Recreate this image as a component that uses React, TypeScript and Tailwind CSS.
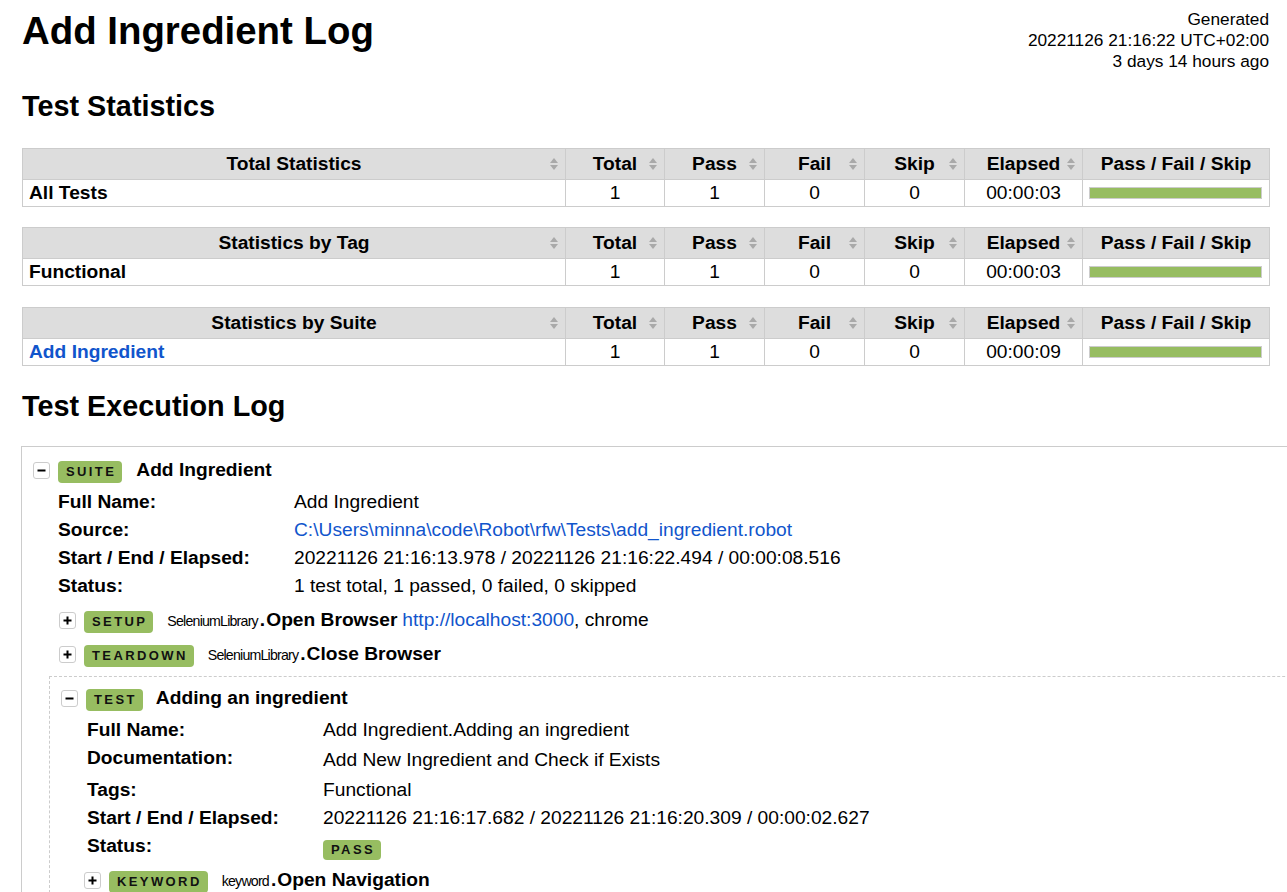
import React from "react";

type StatRow = {
  name: string;
  total: number;
  pass: number;
  fail: number;
  skip: number;
  elapsed: string;
  link?: boolean;
};

const TH = "relative border border-[#ccc] bg-[#ddd] px-[6px] py-[4px] text-center font-bold leading-[22px]";
const TD = "border border-[#ccc] px-[6px] py-[2px] text-center leading-[22px]";
const TD_NAME = "border border-[#ccc] px-[6px] py-[2px] text-left font-bold leading-[22px]";

function SortIcon() {
  return (
    <svg
      width="10"
      height="14"
      viewBox="0 0 10 14"
      className="absolute right-[6px] top-1/2 -translate-y-1/2"
    >
      <path d="M5 1 9 6H1z" fill="#a9a9a9" />
      <path d="M5 13 1 8h8z" fill="#a9a9a9" />
    </svg>
  );
}

function StatsTable({ title, row }: { title: string; row: StatRow }) {
  return (
    <table className="w-[1248px] table-fixed border-collapse">
      <colgroup>
        <col />
        <col className="w-[99px]" />
        <col className="w-[100px]" />
        <col className="w-[100px]" />
        <col className="w-[100px]" />
        <col className="w-[118px]" />
        <col className="w-[187px]" />
      </colgroup>
      <thead>
        <tr>
          <th className={TH}>
            {title}
            <SortIcon />
          </th>
          {["Total", "Pass", "Fail", "Skip", "Elapsed"].map(h => (
            <th key={h} className={TH}>
              {h}
              <SortIcon />
            </th>
          ))}
          <th className={TH}>Pass / Fail / Skip</th>
        </tr>
      </thead>
      <tbody>
        <tr>
          <td className={TD_NAME}>
            {row.link ? <span className="text-[#15c]">{row.name}</span> : row.name}
          </td>
          <td className={TD}>{row.total}</td>
          <td className={TD}>{row.pass}</td>
          <td className={TD}>{row.fail}</td>
          <td className={TD}>{row.skip}</td>
          <td className={TD}>{row.elapsed}</td>
          <td className="border border-[#ccc] py-[2px] pl-[6px] pr-[7px]">
            <div className="h-[12px] border border-[#ccc] bg-[#f2f2f2]">
              <div className="h-full w-full bg-[#97bd61]" />
            </div>
          </td>
        </tr>
      </tbody>
    </table>
  );
}

function Toggle({ open }: { open: boolean }) {
  return (
    <span className="flex h-[17px] w-[17px] shrink-0 items-center justify-center rounded-[3px] border border-[#ccc] bg-white">
      <svg width="11" height="11" viewBox="0 0 11 11">
        <rect x="1.5" y="4.5" width="8" height="2" fill="#000" />
        {!open && <rect x="4.5" y="1.5" width="2" height="8" fill="#000" />}
      </svg>
    </span>
  );
}

function Badge({ children, small }: { children: React.ReactNode; small?: boolean }) {
  return (
    <span
      className={
        small
          ? "inline-block rounded-[4px] bg-[#97bd61] pl-[8px] pr-[6px] py-[2px] text-[13px] font-bold leading-[16px] tracking-[2.4px] text-[#111]"
          : "inline-block rounded-[4px] bg-[#97bd61] pl-[8px] pr-[6px] py-[3px] text-[13px] font-bold leading-[16px] tracking-[2.4px] text-[#111]"
      }
    >
      {children}
    </span>
  );
}

function Meta({ label, children }: { label: string; children: React.ReactNode }) {
  return (
    <div className="flex h-[28px] items-center">
      <div className="w-[236px] shrink-0 font-bold">{label}</div>
      <div>{children}</div>
    </div>
  );
}

function KeywordRow({
  type,
  lib,
  name,
  args,
}: {
  type: string;
  lib: string;
  name: string;
  args?: React.ReactNode;
}) {
  return (
    <div className="flex h-[34px] items-center pl-[10px]">
      <Toggle open={false} />
      <span className="ml-[8px]">
        <Badge>{type}</Badge>
      </span>
      <span className="ml-[14px] whitespace-nowrap">
        <span className="text-[14.2px] tracking-[-0.8px]">{lib}</span>
        <span className="ml-[2px] font-bold">.</span>
        <span className="ml-[1px] font-bold">{name}</span>
        {args && <span className="ml-[5px]">{args}</span>}
      </span>
    </div>
  );
}

export default function App() {
  return (
    <div className="h-[892px] w-[1287px] overflow-hidden bg-white font-['Liberation_Sans',Arial,sans-serif] text-[19.2px] text-black">
      <div className="flex items-start justify-between pl-[22px] pr-[18px] pt-[9px]">
        <h1 className="text-[38.4px] font-bold leading-[44px]">Add Ingredient Log</h1>
        <div className="text-right text-[17.28px] leading-[21px]">
          Generated
          <br />
          20221126 21:16:22 UTC+02:00
          <br />3 days 14 hours ago
        </div>
      </div>

      <div className="pl-[22px]">
        <h2 className="mt-[17px] text-[28.8px] font-bold leading-[34px]">Test Statistics</h2>

        <div className="mt-[25px]">
          <StatsTable
            title="Total Statistics"
            row={{ name: "All Tests", total: 1, pass: 1, fail: 0, skip: 0, elapsed: "00:00:03" }}
          />
        </div>
        <div className="mt-[20px]">
          <StatsTable
            title="Statistics by Tag"
            row={{ name: "Functional", total: 1, pass: 1, fail: 0, skip: 0, elapsed: "00:00:03" }}
          />
        </div>
        <div className="mt-[21px]">
          <StatsTable
            title="Statistics by Suite"
            row={{ name: "Add Ingredient", total: 1, pass: 1, fail: 0, skip: 0, elapsed: "00:00:09", link: true }}
          />
        </div>

        <h2 className="mt-[23px] text-[28.8px] font-bold leading-[34px]">Test Execution Log</h2>

        {/* suite */}
        <div className="-ml-[1px] mt-[23px] w-[1400px] border border-[#ccc] pl-[11px] pt-[8px]">
          <div className="flex h-[30px] items-center">
            <Toggle open />
            <span className="ml-[8px]">
              <Badge>SUITE</Badge>
            </span>
            <span className="ml-[14px] font-bold">Add Ingredient</span>
          </div>

          <div className="ml-[25px] mt-[3px]">
            <Meta label="Full Name:">Add Ingredient</Meta>
            <Meta label="Source:">
              <span className="text-[#15c]">C:\Users\minna\code\Robot\rfw\Tests\add_ingredient.robot</span>
            </Meta>
            <Meta label="Start / End / Elapsed:">
              20221126 21:16:13.978 / 20221126 21:16:22.494 / 00:00:08.516
            </Meta>
            <Meta label="Status:">1 test total, 1 passed, 0 failed, 0 skipped</Meta>
          </div>

          <div className="ml-[16px] mt-[3px]">
            <KeywordRow
              type="SETUP"
              lib="SeleniumLibrary"
              name="Open Browser"
              args={
                <>
                  <span className="text-[#15c]">http://localhost:3000</span>, chrome
                </>
              }
            />
            <KeywordRow type="TEARDOWN" lib="SeleniumLibrary" name="Close Browser" />

            {/* test */}
            <div className="mt-[5px] border border-dashed border-[#ccc] pl-[11px] pt-[6px]">
              <div className="flex h-[30px] items-center">
                <Toggle open />
                <span className="ml-[8px]">
                  <Badge>TEST</Badge>
                </span>
                <span className="ml-[13px] font-bold">Adding an ingredient</span>
              </div>

              <div className="ml-[26px] mt-[3px]">
                <Meta label="Full Name:">Add Ingredient.Adding an ingredient</Meta>
                <div className="flex h-[32px]">
                  <div className="w-[236px] shrink-0 font-bold leading-[28px]">Documentation:</div>
                  <div className="pt-[2px] leading-[28px]">Add New Ingredient and Check if Exists</div>
                </div>
                <Meta label="Tags:">Functional</Meta>
                <Meta label="Start / End / Elapsed:">
                  20221126 21:16:17.682 / 20221126 21:16:20.309 / 00:00:02.627
                </Meta>
                <div className="flex h-[28px] items-center">
                  <div className="w-[236px] shrink-0 font-bold">Status:</div>
                  <div className="pt-[4px]">
                    <Badge small>PASS</Badge>
                  </div>
                </div>
              </div>

              <div className="ml-[13px] mt-[3px]">
                <KeywordRow type="KEYWORD" lib="keyword" name="Open Navigation" />
              </div>
            </div>
          </div>
        </div>
      </div>
    </div>
  );
}
